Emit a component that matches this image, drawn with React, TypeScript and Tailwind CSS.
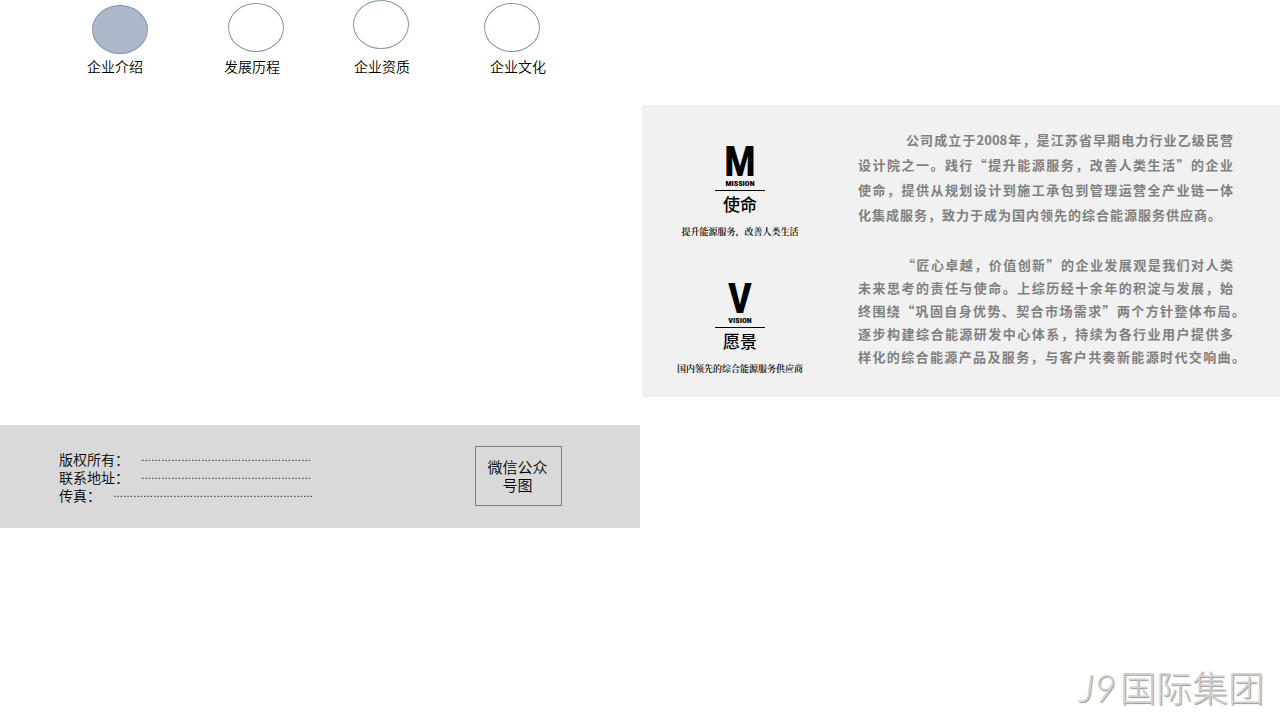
const tabs = [
  { label: "企业介绍", item: "ml-[87px] w-[61px] pt-[5px]", circle: "self-end bg-[#adb7ca]", text: "self-start" },
  { label: "发展历程", item: "ml-[76px] w-[60px] pt-[3px]", circle: "self-end", text: "self-start" },
  { label: "企业资质", item: "ml-[69px] w-[57px] pt-0", circle: "self-start", text: "self-end" },
  { label: "企业文化", item: "ml-[74px] w-[62px] pt-[3px]", circle: "self-start", text: "self-end" },
];

const intro = [
  { text: "公司成立于2008年，是江苏省早期电力行业乙级民营", width: "w-[375px] pl-12" },
  { text: "设计院之一。践行“提升能源服务，改善人类生活”的企业", width: "w-[375px]" },
  { text: "使命，提供从规划设计到施工承包到管理运营全产业链一体", width: "w-[375px]" },
  { text: "化集成服务，致力于成为国内领先的综合能源服务供应商。", width: "w-[363px]" },
];

const outlook = [
  { text: "“匠心卓越，价值创新”的企业发展观是我们对人类", width: "w-[375px] pl-11" },
  { text: "未来思考的责任与使命。上综历经十余年的积淀与发展，始", width: "w-[375px]" },
  { text: "终围绕“巩固自身优势、契合市场需求”两个方针整体布局。", width: "w-[387px]" },
  { text: "逐步构建综合能源研发中心体系，持续为各行业用户提供多", width: "w-[375px]" },
  { text: "样化的综合能源产品及服务，与客户共奏新能源时代交响曲。", width: "w-[387px]" },
];

const contacts = [
  { label: "版权所有：", dots: 17 },
  { label: "联系地址：", dots: 17 },
  { label: "传真：", dots: 20 },
];

function Value({ letter, word, title, caption }: { letter: string; word: string; title: string; caption: string }) {
  return (
    <section className="flex flex-col items-center text-black">
      <div className="font-['Liberation_Sans_Narrow','Roboto_Condensed',sans-serif] text-[42px] leading-8 font-bold">{letter}</div>
      <div className="font-['Liberation_Sans_Narrow','Roboto_Condensed',sans-serif] text-[8px] leading-3 font-black">{word}</div>
      <div className="w-[50px] border-t border-black" />
      <h2 className="text-[17px] leading-[26px] font-medium">{title}</h2>
      <p className="mt-[7px] font-['Noto_Serif_CJK_SC','Noto_Sans_CJK_SC',serif] text-[9px] leading-4 font-semibold whitespace-nowrap">{caption}</p>
    </section>
  );
}

function Lines({ lines, leading }: { lines: { text: string; width: string }[]; leading: string }) {
  return (
    <p className={`text-[13px] font-bold text-[#808080] ${leading}`}>
      {lines.map((line) => (
        <span key={line.text} className={`block text-justify whitespace-nowrap [text-align-last:justify] ${line.width}`}>
          {line.text}
        </span>
      ))}
    </p>
  );
}

export default function App() {
  return (
    <div lang="zh-CN" className="min-h-screen bg-white font-['Noto_Sans_CJK_SC',sans-serif] text-black">
      <nav className="flex h-[76px]">
        {tabs.map((tab) => (
          <button key={tab.label} type="button" className={`flex shrink-0 flex-col justify-between ${tab.item}`}>
            <span className={`h-[49px] w-14 shrink-0 rounded-[50%] border border-[#8497b0] ${tab.circle}`} />
            <span className={`text-sm leading-5 font-[350] whitespace-nowrap ${tab.text}`}>{tab.label}</span>
          </button>
        ))}
      </nav>

      <main className="mt-[29px] ml-auto w-1/2 pl-0.5">
        <div className="flex h-[292px] bg-[#f1f1f1]">
          <div className="flex w-[216px] shrink-0 flex-col gap-[43px] pt-[41px] pr-5">
            <Value letter="M" word="MISSION" title="使命" caption="提升能源服务，改善人类生活" />
            <Value letter="V" word="VISION" title="愿景" caption="国内领先的综合能源服务供应商" />
          </div>
          <div className="flex flex-col gap-[26px] pt-[22px]">
            <Lines lines={intro} leading="leading-[25px]" />
            <Lines lines={outlook} leading="leading-[23px]" />
          </div>
        </div>
      </main>

      <footer className="mt-7 flex h-[103px] w-1/2 items-start justify-between bg-[#d9d9d9] pt-[21px] pr-[78px] pl-[59px]">
        <dl className="mt-1 text-sm leading-[18px] font-[350]">
          {contacts.map((contact) => (
            <div key={contact.label} className="flex">
              <dt>{contact.label}</dt>
              <dd className="ml-3 font-['Liberation_Sans',sans-serif] text-[10px] leading-4">{"…".repeat(contact.dots)}</dd>
            </div>
          ))}
        </dl>
        <div className="flex h-[60px] w-[87px] items-center justify-center border border-[#7f7f7f] pr-0.5 text-center text-[15px] leading-[18px] font-[350]">
          微信公众
          <br />
          号图
        </div>
      </footer>

      <p className="mt-[136px] pr-4 text-right text-[36px] leading-[44px] font-light text-[#d2d2d2] [text-shadow:1px_1px_1px_#999]">
        <span className="mr-1 font-['Lato',sans-serif] text-[38px] font-light italic">J9</span>国际集团
      </p>
    </div>
  );
}
